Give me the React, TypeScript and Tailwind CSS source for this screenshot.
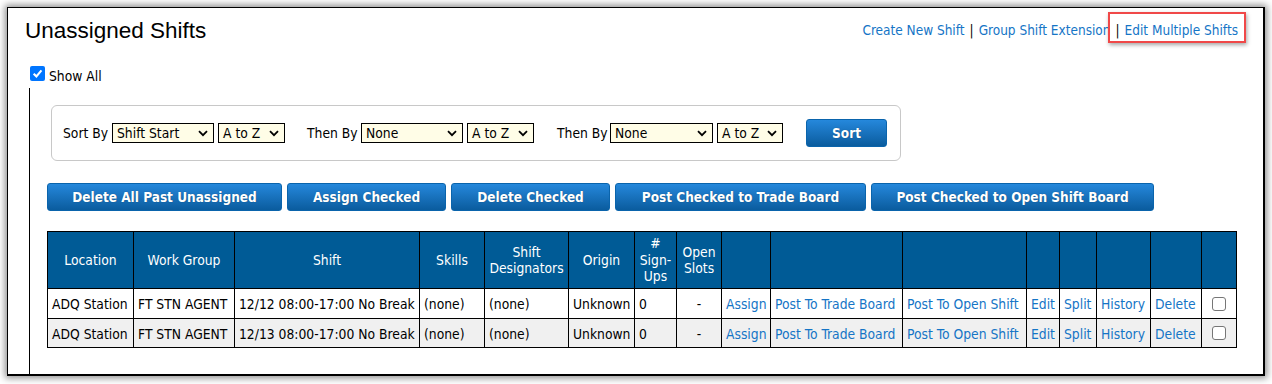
import React from "react";

const TF = { fontFamily: '"DejaVu Sans Condensed", "DejaVu Sans", Verdana, sans-serif' };

function Chevron() {
  return (
    <svg width="10" height="7" viewBox="0 0 10 7" className="shrink-0">
      <path d="M1 1.2 L5 5.2 L9 1.2" fill="none" stroke="#000" strokeWidth="1.8" />
    </svg>
  );
}

function Sel({ w, label }: { w: string; label: string }) {
  return (
    <div className={`${w} h-[20px] border border-black bg-[#fffde7] flex items-center justify-between pl-[4px] pr-[5px] text-black`}>
      <span className="leading-none pt-[1px]">{label}</span>
      <Chevron />
    </div>
  );
}

function Btn({ w, children }: { w: string; children: React.ReactNode }) {
  return (
    <div
      className={`${w} h-[28px] rounded-[3px] border border-[#0a64ac] bg-gradient-to-b from-[#2588dc] to-[#0a5c9e] text-white text-[13.5px] font-bold flex items-center justify-center whitespace-nowrap [text-shadow:0_0_1px_rgba(0,0,0,0.4)]`}
    >
      {children}
    </div>
  );
}

function Box({ checked }: { checked?: boolean }) {
  if (checked) {
    return (
      <div className="w-[15px] h-[15px] rounded-[2px] bg-[#0075ff] flex items-center justify-center">
        <svg width="11" height="11" viewBox="0 0 10 10">
          <path d="M1.5 5.2 L4 7.6 L8.6 2.2" fill="none" stroke="#fff" strokeWidth="1.9" />
        </svg>
      </div>
    );
  }
  return <div className="w-[14px] h-[14px] rounded-[3px] border border-[#767676] bg-white mx-auto" />;
}

const cols = [86, 101, 185, 65, 84, 66, 42, 45, 49, 132, 124, 33, 37, 54, 51, 35];
const colCls = [
  "w-[86px]", "w-[101px]", "w-[185px]", "w-[65px]", "w-[84px]", "w-[66px]", "w-[42px]", "w-[45px]",
  "w-[49px]", "w-[132px]", "w-[124px]", "w-[33px]", "w-[37px]", "w-[54px]", "w-[51px]", "w-[35px]",
];

const rows = [
  { date: "12/12", bg: "bg-white" },
  { date: "12/13", bg: "bg-[#f0f0f0]" },
];

export default function App() {
  const th = "border border-black bg-[#005b96] text-white font-normal text-center align-middle leading-[16.5px] px-[2px]";
  const td = "border border-black px-[4px] pt-[2px] whitespace-nowrap overflow-hidden text-black";
  const link = "border border-black px-[4px] pt-[2px] whitespace-nowrap overflow-hidden text-[#1575c6]";
  return (
    <div className="w-[1272px] h-[384px] bg-white overflow-hidden pt-[7px] pl-[7px] text-[13.75px]" style={TF}>
      <div className="relative w-[1258px] h-[369px] bg-white border-l border-t border-r-2 border-b-2 border-black shadow-[0_0_7px_2px_rgba(0,0,0,0.45)] flex flex-col">
        {/* header */}
        <div className="h-[44px] shrink-0 flex items-center justify-between pl-[17px] pr-[25px]">
          <div className="text-[22.5px] text-black leading-none pt-[3px]" style={{ fontFamily: '"Liberation Sans", Arial, sans-serif' }}>
            Unassigned Shifts
          </div>
          <div className="flex items-center whitespace-nowrap pt-[1px] text-[13.5px]">
            <span className="text-[#1575c6]">Create New Shift</span>
            <span className="text-black mx-[5px]">|</span>
            <span className="text-[#1575c6]">Group Shift Extension</span>
            <span className="text-black mx-[5px]">|</span>
            <span className="text-[#1575c6]">Edit Multiple Shifts</span>
          </div>
        </div>

        {/* red annotation */}
        <div className="absolute left-[1100px] top-[4px] w-[138px] h-[31px] border-2 border-[#f04848] shadow-[1px_2px_4px_rgba(0,0,0,0.35)] pointer-events-none" />

        {/* show all */}
        <div className="h-[36px] shrink-0 flex items-start pt-[14px] pl-[22px]">
          <Box checked />
          <span className="ml-[4px] text-black leading-[16px] mt-[2px]">Show All</span>
        </div>

        {/* container */}
        <div className="flex-1 ml-[21px] border-l border-black flex flex-col items-start">
          <div className="mt-[17px] ml-[21px] w-[850px] h-[56px] border border-[#c8c8c8] rounded-[6px] flex items-center pl-[11px] text-black">
            <span className="w-[49px]">Sort By</span>
            <Sel w="w-[102px]" label="Shift Start" />
            <div className="w-[4px]" />
            <Sel w="w-[67px]" label="A to Z" />
            <span className="ml-[22px] w-[54px]">Then By</span>
            <Sel w="w-[102px]" label="None" />
            <div className="w-[4px]" />
            <Sel w="w-[67px]" label="A to Z" />
            <span className="ml-[23px] w-[53px]">Then By</span>
            <Sel w="w-[103px]" label="None" />
            <div className="w-[4px]" />
            <Sel w="w-[66px]" label="A to Z" />
            <div className="ml-[23px]">
              <Btn w="w-[81px]">Sort</Btn>
            </div>
          </div>

          <div className="mt-[22px] ml-[17px] flex gap-[5px]">
            <Btn w="w-[235px]">Delete All Past Unassigned</Btn>
            <Btn w="w-[159px]">Assign Checked</Btn>
            <Btn w="w-[159px]">Delete Checked</Btn>
            <Btn w="w-[251px]">Post Checked to Trade Board</Btn>
            <Btn w="w-[283px]">Post Checked to Open Shift Board</Btn>
          </div>

          <table className="mt-[20px] ml-[17px] border-collapse table-fixed w-[1190px]">
            <colgroup>
              {cols.map((c, i) => (
                <col key={i} className={colCls[i]} />
              ))}
            </colgroup>
            <thead>
              <tr className="h-[57px]">
                <th className={th}>Location</th>
                <th className={th}>Work Group</th>
                <th className={th}>Shift</th>
                <th className={th}>Skills</th>
                <th className={th}>Shift<br />Designators</th>
                <th className={th}>Origin</th>
                <th className={th}>#<br />Sign-<br />Ups</th>
                <th className={th}>Open<br />Slots</th>
                <th className={th}></th>
                <th className={th}></th>
                <th className={th}></th>
                <th className={th}></th>
                <th className={th}></th>
                <th className={th}></th>
                <th className={th}></th>
                <th className={th}></th>
              </tr>
            </thead>
            <tbody>
              {rows.map((r, i) => (
                <tr key={i} className={`${r.bg} ${i === 0 ? "h-[30px]" : "h-[29px]"}`}>
                  <td className={td}>ADQ Station</td>
                  <td className={td}>FT STN AGENT</td>
                  <td className={td}>{r.date} 08:00-17:00 No Break</td>
                  <td className={td}>(none)</td>
                  <td className={td}>(none)</td>
                  <td className={td}>Unknown</td>
                  <td className={td}>0</td>
                  <td className={`${td} text-center`}>-</td>
                  <td className={link}>Assign</td>
                  <td className={link}>Post To Trade Board</td>
                  <td className={link}>Post To Open Shift</td>
                  <td className={link}>Edit</td>
                  <td className={link}>Split</td>
                  <td className={link}>History</td>
                  <td className={link}>Delete</td>
                  <td className="border border-black text-center align-middle">
                    <Box />
                  </td>
                </tr>
              ))}
            </tbody>
          </table>
        </div>
      </div>
    </div>
  );
}
